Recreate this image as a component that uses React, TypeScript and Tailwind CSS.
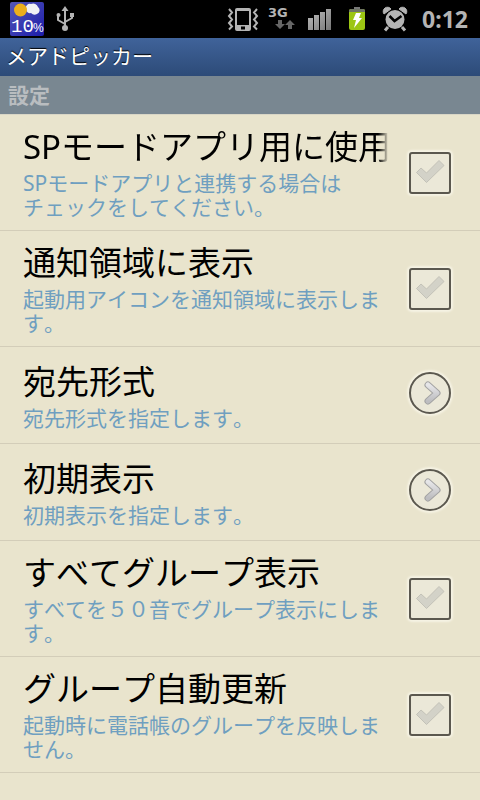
import type { ReactNode } from 'react';

type Setting = {
  id: string;
  title: string;
  summary: string;
  kind: 'check' | 'dialog';
};

const settings: Setting[] = [
  {
    id: 'spmode',
    title: 'SPモードアプリ用に使用',
    summary: 'SPモードアプリと連携する場合は\nチェックをしてください。',
    kind: 'check',
  },
  { id: 'notify', title: '通知領域に表示', summary: '起動用アイコンを通知領域に表示します。', kind: 'check' },
  { id: 'format', title: '宛先形式', summary: '宛先形式を指定します。', kind: 'dialog' },
  { id: 'initial', title: '初期表示', summary: '初期表示を指定します。', kind: 'dialog' },
  { id: 'group', title: 'すべてグループ表示', summary: 'すべてを５０音でグループ表示にします。', kind: 'check' },
  { id: 'update', title: 'グループ自動更新', summary: '起動時に電話帳のグループを反映しません。', kind: 'check' },
];

export default function App() {
  return (
    <main
      lang="ja"
      className="flex min-h-screen flex-col bg-[#e9e4cd] font-['Noto_Sans','Noto_Sans_CJK_JP',sans-serif] text-black [font-kerning:none]"
    >
      <StatusBar />
      <h1 className="h-[38px] bg-linear-to-b from-[#40639a] to-[#2d4b78] px-1.5 text-[21px] leading-9 text-white [text-shadow:0_-1px_1px_#000]">
        メアドピッカー
      </h1>
      <h2 className="h-[39px] border-b border-[#d9d6c6] bg-[#798791] px-2 text-[21px] leading-[38px] font-bold text-[#b9bdc0]">
        設定
      </h2>
      <ul>
        {settings.map((s) => (
          <li key={s.id} className="border-b border-[#d3cdb9]">
            {s.kind === 'check' ? <CheckRow setting={s} /> : <DialogRow setting={s} />}
          </li>
        ))}
      </ul>
    </main>
  );
}

const rowClass = 'flex min-h-24 w-full items-center gap-5 pr-[29px] pl-[23px] text-left';

function RowText({ setting }: { setting: Setting }) {
  return (
    <span className="block min-w-0 flex-1 pt-2 pb-[11px]">
      <span
        className={`block overflow-hidden text-[33px] leading-12 whitespace-nowrap ${
          setting.id === 'spmode' ? 'mask-r-from-97% mask-r-to-100%' : ''
        }`}
      >
        {setting.title}
      </span>
      <span className="block text-[21px] leading-6 whitespace-pre-line text-[#6f9fc0]">{setting.summary}</span>
    </span>
  );
}

function CheckRow({ setting }: { setting: Setting }) {
  return (
    <label className={rowClass}>
      <RowText setting={setting} />
      <span className="grid size-[42px] shrink-0">
        <input
          type="checkbox"
          name={setting.id}
          className="peer col-start-1 row-start-1 size-[42px] appearance-none rounded-[3px] border-2 border-[#5b584f] bg-[#ebe8d8] shadow-[0_0_2px_2px_#f6f3e4]"
        />
        <svg
          viewBox="0 0 42 42"
          className="pointer-events-none col-start-1 row-start-1 size-[42px] fill-[#d3d2c8] stroke-[#c3c2b8] peer-checked:fill-[#7fb53a]"
        >
          <path d="M7.500 20.500l4.500-4.500 5.500 5L30 8.500l5 5-17.500 17z" strokeWidth="1" strokeLinejoin="round" />
        </svg>
      </span>
    </label>
  );
}

function DialogRow({ setting }: { setting: Setting }) {
  return (
    <button type="button" className={rowClass}>
      <RowText setting={setting} />
      <span className="mb-1 size-[42px] shrink-0 rounded-full border-2 border-[#5b584f] bg-[#ebe8d8] shadow-[0_0_2px_2px_#f6f3e4]">
        <svg viewBox="0 0 38 38" className="size-full" fill="none" strokeLinecap="round" strokeLinejoin="round">
          <defs>
            <linearGradient id={`arrow-${setting.id}`} x1="0" y1="0" x2="0" y2="1">
              <stop offset="0" stopColor="#e6e6e8" />
              <stop offset="1" stopColor="#bdbdc0" />
            </linearGradient>
          </defs>
          <path d="M17 11l9 8-9 8" stroke="#a3a3a3" strokeWidth="7" />
          <path d="M17 11l9 8-9 8" stroke={`url(#arrow-${setting.id})`} strokeWidth="5" />
        </svg>
      </span>
    </button>
  );
}

function StatusBar() {
  return (
    <header className="flex h-[38px] items-center bg-black pr-3 pl-2 text-[#b4b4b4]">
      <StatusIcon label="10%">
        <defs>
          <linearGradient id="tile" x1="0" y1="0" x2="1" y2="1">
            <stop offset="0" stopColor="#5558b8" />
            <stop offset="1" stopColor="#1c1caa" />
          </linearGradient>
        </defs>
        <rect x="2" y="2" width="34" height="34" rx="2" fill="url(#tile)" />
        <path d="M18 9a4 4 0 0 1 5-5 5 5 0 0 1 7 3 4 4 0 0 1-1 7 5 5 0 0 1-6-1 4 4 0 0 1-5-4z" fill="#f0f0f4" />
        <circle cx="12.500" cy="10" r="6.500" fill="#ecae1c" />
        <text x="3" y="32" fontSize="19" fill="#fff" fontFamily="Liberation Mono">
          10
        </text>
        <text x="25" y="32" fontSize="12" fill="#fff" fontFamily="Liberation Sans">
          %
        </text>
      </StatusIcon>
      <StatusIcon label="USB">
        <g fill="none" stroke="currentColor" strokeWidth="2">
          <path d="M19 28V9M19 24l-7-4v-5M19 22l7-4v-3" />
        </g>
        <path d="M19 6l3.500 5h-7z" fill="currentColor" />
        <circle cx="19" cy="28" r="3" fill="currentColor" />
        <circle cx="12.500" cy="15" r="2" fill="currentColor" />
        <path d="M24 13h4v4h-4z" fill="currentColor" />
      </StatusIcon>
      <span className="flex-1" />
      <StatusIcon label="バイブレーション">
        <path
          fillRule="evenodd"
          d="M13 8h12a2 2 0 0 1 2 2v19a2 2 0 0 1-2 2H13a2 2 0 0 1-2-2V10a2 2 0 0 1 2-2zM13 11v14h12V11zM17 26.500v3h4v-3z"
          fill="currentColor"
        />
        <path
          d="M5 9l3 3.500-3 3.500 3 3.500-3 3.500 3 3.500-3 3M33 9l-3 3.500 3 3.500-3 3.500 3 3.500-3 3.500 3 3"
          fill="none"
          stroke="currentColor"
          strokeWidth="2"
        />
      </StatusIcon>
      <StatusIcon label="3G">
        <text x="6" y="17" fontSize="13" fontWeight="700" fill="currentColor" fontFamily="DejaVu Sans">
          3G
        </text>
        <path d="M16 20h4v4h3l-5 5-5-5h3zM26 29h4v-4h3l-5-5-5 5h3z" fill="#666" />
      </StatusIcon>
      <StatusIcon label="電波">
        <defs>
          <linearGradient id="bars" x1="0" y1="0" x2="1" y2="1">
            <stop offset="0" stopColor="#c0c0c0" />
            <stop offset="1" stopColor="#777" />
          </linearGradient>
        </defs>
        <path d="M8 18h5v12H8zM14 15h5v15h-5zM20 12h5v18h-5zM26 9h5v21h-5z" fill="url(#bars)" />
      </StatusIcon>
      <StatusIcon label="充電中">
        <path d="M16 7h6v3h-6z" fill="#777" />
        <rect x="11" y="9" width="16" height="21" rx="2" fill="#9cc613" />
        <path d="M11 11a2 2 0 0 1 2-2h12a2 2 0 0 1 2 2v1H11z" fill="#6f7565" />
        <path d="M18 13h5l-2 5h3l-8 10 2-8h-3z" fill="#fff" />
      </StatusIcon>
      <StatusIcon label="アラーム">
        <circle cx="19" cy="19.500" r="9.500" fill="currentColor" />
        <path d="M12 27l-3 3.500M26 27l3 3.500" stroke="currentColor" strokeWidth="3" />
        <path d="M8 14a4 4 0 0 1 7-5zM30 14a4 4 0 0 0-7-5z" fill="currentColor" stroke="currentColor" />
        <path d="M13.500 16l5 5 7-5" fill="none" stroke="#000" strokeWidth="2.500" />
      </StatusIcon>
      <time className="ml-2 text-[23px] leading-[38px] font-bold">0:12</time>
    </header>
  );
}

function StatusIcon({ label, children }: { label: string; children: ReactNode }) {
  return (
    <svg viewBox="0 0 38 38" role="img" aria-label={label} className="size-[38px] shrink-0">
      {children}
    </svg>
  );
}
